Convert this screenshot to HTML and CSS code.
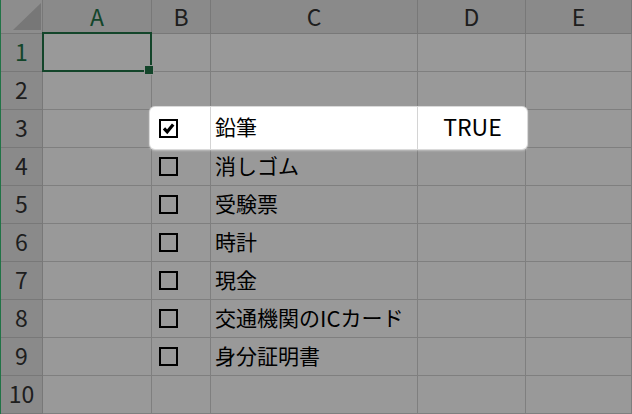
FILE: index.html
```html
<!DOCTYPE html>
<html lang="ja">

<head>
    <meta charset="utf-8">
    <title>持ち物チェックリスト</title>
    <link rel="stylesheet" href="styles.css">
</head>

<body>
    <div class="sheet">
        <div class="grid">
            <!-- header row -->
            <div class="corner">
                <svg width="28" height="27" viewBox="0 0 28 27"><polygon points="0,27 28,27 28,0" fill="#c6c6c6"/></svg>
            </div>
            <div class="col-head selected">A</div>
            <div class="col-head">B</div>
            <div class="col-head">C</div>
            <div class="col-head">D</div>
            <div class="col-head">E</div>

            <div class="row-head selected">1</div>
            <div class="cell active"></div>
            <div class="cell"></div>
            <div class="cell"></div>
            <div class="cell"></div>
            <div class="cell"></div>

            <div class="row-head">2</div>
            <div class="cell"></div>
            <div class="cell"></div>
            <div class="cell"></div>
            <div class="cell"></div>
            <div class="cell"></div>

            <!-- row 3 is the highlighted one -->
            <div class="row-head">3</div>
            <div class="cell"></div>
            <div class="spotlight">
                <div class="part">
                    <span class="check">
                        <svg width="15" height="15" viewBox="0 0 15 15"><path d="M3 7.4 L6.2 10.8 L12.2 3.6" fill="none" stroke="#000" stroke-width="3.2"/></svg>
                    </span>
                </div>
                <div class="part text">鉛筆</div>
                <div class="part bool">TRUE</div>
            </div>
            <div class="cell"></div>

            <div class="row-head">4</div>
            <div class="cell"></div>
            <div class="cell"><span class="check"></span></div>
            <div class="cell text">消しゴム</div>
            <div class="cell"></div>
            <div class="cell"></div>

            <div class="row-head">5</div>
            <div class="cell"></div>
            <div class="cell"><span class="check"></span></div>
            <div class="cell text">受験票</div>
            <div class="cell"></div>
            <div class="cell"></div>

            <div class="row-head">6</div>
            <div class="cell"></div>
            <div class="cell"><span class="check"></span></div>
            <div class="cell text">時計</div>
            <div class="cell"></div>
            <div class="cell"></div>

            <div class="row-head">7</div>
            <div class="cell"></div>
            <div class="cell"><span class="check"></span></div>
            <div class="cell text">現金</div>
            <div class="cell"></div>
            <div class="cell"></div>

            <div class="row-head">8</div>
            <div class="cell"></div>
            <div class="cell"><span class="check"></span></div>
            <div class="cell text">交通機関の<span class="latin">IC</span>カード</div>
            <div class="cell"></div>
            <div class="cell"></div>

            <div class="row-head">9</div>
            <div class="cell"></div>
            <div class="cell"><span class="check"></span></div>
            <div class="cell text">身分証明書</div>
            <div class="cell"></div>
            <div class="cell"></div>

            <div class="row-head">10</div>
            <div class="cell"></div>
            <div class="cell"></div>
            <div class="cell"></div>
            <div class="cell"></div>
            <div class="cell"></div>
        </div>
        <div class="dim"></div>
    </div>
</body>

</html>
```

FILE: styles.css
```css
* {
    box-sizing: border-box;
}

body {
    margin: 0;
    background-color: #fff;
    font-family: "Noto Sans CJK JP", "Noto Sans", sans-serif;
    color: #000;
}

.sheet {
    position: relative;
    width: 632px;
    height: 414px;
    overflow: hidden;
    border-left: 1px solid #217346;
}

.grid {
    display: grid;
    grid-template-columns: 42px 109px 59px 207px 108px 1fr;
    grid-template-rows: 34px repeat(10, 38px);
    height: 100%;
}

/* headers */
.corner,
.col-head,
.row-head {
    display: flex;
    align-items: center;
    justify-content: center;
    background-color: #e6e6e6;
    border-right: 1px solid #c8c8c8;
    border-bottom: 1px solid #c8c8c8;
    color: #333;
    font-size: 23px;
    line-height: 1.15;
}

.row-head {
    padding-bottom: 2px;
}

.corner {
    background-color: #ebebeb;
    align-items: flex-end;
    justify-content: flex-end;
    padding: 0 1px 3px 0;
}

.corner svg {
    display: block;
}

.col-head.selected,
.row-head.selected {
    color: #217346;
}

/* cells */
.cell {
    display: flex;
    align-items: center;
    background-color: #fff;
    border-right: 1px solid #d4d4d4;
    border-bottom: 1px solid #d4d4d4;
}

.cell.active {
    position: relative;
}

.cell.active::before {
    content: "";
    position: absolute;
    top: -2px;
    left: -1px;
    right: -1px;
    bottom: -1px;
    border: 2px solid #217346;
}

.cell.active::after {
    content: "";
    position: absolute;
    right: -3px;
    bottom: -4px;
    width: 8px;
    height: 8px;
    background-color: #217346;
    border: 1px solid #fff;
}

.text {
    padding-left: 4px;
    font-size: 21px;
    line-height: 1.3;
    padding-bottom: 2px;
    white-space: nowrap;
}

.latin {
    font-size: 22px;
}

.bool {
    justify-content: center;
    font-size: 23px;
    line-height: 1.3;
    padding-bottom: 2px;
}

.check {
    display: flex;
    align-items: center;
    justify-content: center;
    width: 19px;
    height: 19px;
    margin-left: 7px;
    border: 2px solid #000;
}

.check svg {
    display: block;
}

/* grey veil over the sheet, row 3 sits above it */
.dim {
    position: absolute;
    top: 0;
    left: 0;
    right: 0;
    bottom: 0;
    background-color: rgba(0, 0, 0, 0.4);
    z-index: 1;
}

.spotlight {
    grid-column: 3 / 6;
    position: relative;
    z-index: 2;
    display: grid;
    grid-template-columns: 59px 207px 1fr;
    margin: -3px -1px -1px -2px;
    padding-left: 2px;
    background-color: #fff;
    border-radius: 5px;
    box-shadow: 0 0 0 1px #dadada, 0 1px 2px 1px rgba(255, 255, 255, 0.35);
}

.part {
    display: flex;
    align-items: center;
    border-right: 1px solid #d4d4d4;
}

.part.bool {
    border-right: none;
}
```
